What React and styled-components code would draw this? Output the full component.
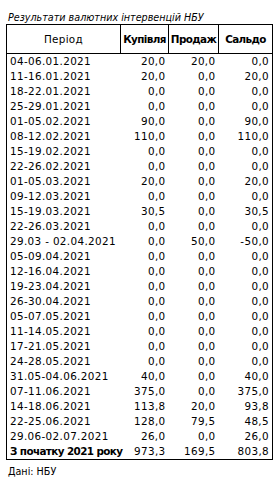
import React from 'react'
import styled, { createGlobalStyle } from 'styled-components'

const rows = [
  ['04-06.01.2021', '20,0', '20,0', '0,0'],
  ['11-16.01.2021', '20,0', '0,0', '20,0'],
  ['18-22.01.2021', '0,0', '0,0', '0,0'],
  ['25-29.01.2021', '0,0', '0,0', '0,0'],
  ['01-05.02.2021', '90,0', '0,0', '90,0'],
  ['08-12.02.2021', '110,0', '0,0', '110,0'],
  ['15-19.02.2021', '0,0', '0,0', '0,0'],
  ['22-26.02.2021', '0,0', '0,0', '0,0'],
  ['01-05.03.2021', '20,0', '0,0', '20,0'],
  ['09-12.03.2021', '0,0', '0,0', '0,0'],
  ['15-19.03.2021', '30,5', '0,0', '30,5'],
  ['22-26.03.2021', '0,0', '0,0', '0,0'],
  ['29.03 - 02.04.2021', '0,0', '50,0', '-50,0'],
  ['05-09.04.2021', '0,0', '0,0', '0,0'],
  ['12-16.04.2021', '0,0', '0,0', '0,0'],
  ['19-23.04.2021', '0,0', '0,0', '0,0'],
  ['26-30.04.2021', '0,0', '0,0', '0,0'],
  ['05-07.05.2021', '0,0', '0,0', '0,0'],
  ['11-14.05.2021', '0,0', '0,0', '0,0'],
  ['17-21.05.2021', '0,0', '0,0', '0,0'],
  ['24-28.05.2021', '0,0', '0,0', '0,0'],
  ['31.05-04.06.2021', '40,0', '0,0', '40,0'],
  ['07-11.06.2021', '375,0', '0,0', '375,0'],
  ['14-18.06.2021', '113,8', '20,0', '93,8'],
  ['22-25.06.2021', '128,0', '79,5', '48,5'],
  ['29.06-02.07.2021', '26,0', '0,0', '26,0'],
]

const GlobalStyle = createGlobalStyle`
  body {
    margin: 0;
    background: #fff;
    font-family: "DejaVu Sans", Verdana, sans-serif;
    color: #000;
  }
`

const Page = styled.div`
  padding: 11px 5px 0 6px;
  width: 276px;
  box-sizing: border-box;
`

const Title = styled.div`
  font-size: 9.6px;
  font-style: italic;
  line-height: 13px;
  padding-left: 2px;
`

const Table = styled.table`
  border-collapse: collapse;
  border: 1px solid #000;
  width: 266px;
  table-layout: fixed;
  font-size: 10.4px;
`

const Head = styled.th`
  height: 28px;
  padding: 0;
  border: 1px solid #000;
  font-weight: ${p => (p.$bold ? 'bold' : 'normal')};
  letter-spacing: ${p => (p.$bold ? '-0.6px' : '0.3px')};
  text-align: center;
  vertical-align: middle;
`

const Cell = styled.td`
  height: 15px;
  padding: 0 ${p => (p.$num ? '3px' : '0')} 0 ${p => (p.$num ? '0' : '3px')};
  text-align: ${p => (p.$num ? 'right' : 'left')};
  font-weight: ${p => (p.$bold ? 'bold' : 'normal')};
  letter-spacing: ${p => (p.$bold ? '-0.6px' : '0.35px')};
  white-space: nowrap;
  line-height: 15px;
`

const Source = styled.div`
  font-size: 9.6px;
  line-height: 13px;
  padding: 5px 0 0 2px;
`

export default function App() {
  return (
    <Page>
      <GlobalStyle />
      <Title>Результати валютних інтервенцій НБУ</Title>
      <Table>
        <colgroup>
          <col style={{ width: 114 }} />
          <col style={{ width: 48 }} />
          <col style={{ width: 50 }} />
          <col style={{ width: 54 }} />
        </colgroup>
        <thead>
          <tr>
            <Head>Період</Head>
            <Head $bold>Купівля</Head>
            <Head $bold>Продаж</Head>
            <Head $bold>Сальдо</Head>
          </tr>
        </thead>
        <tbody>
          {rows.map(r => (
            <tr key={r[0]}>
              <Cell>{r[0]}</Cell>
              <Cell $num>{r[1]}</Cell>
              <Cell $num>{r[2]}</Cell>
              <Cell $num>{r[3]}</Cell>
            </tr>
          ))}
          <tr>
            <Cell $bold>З початку 2021 року</Cell>
            <Cell $num>973,3</Cell>
            <Cell $num>169,5</Cell>
            <Cell $num>803,8</Cell>
          </tr>
        </tbody>
      </Table>
      <Source>Дані: НБУ</Source>
    </Page>
  )
}
